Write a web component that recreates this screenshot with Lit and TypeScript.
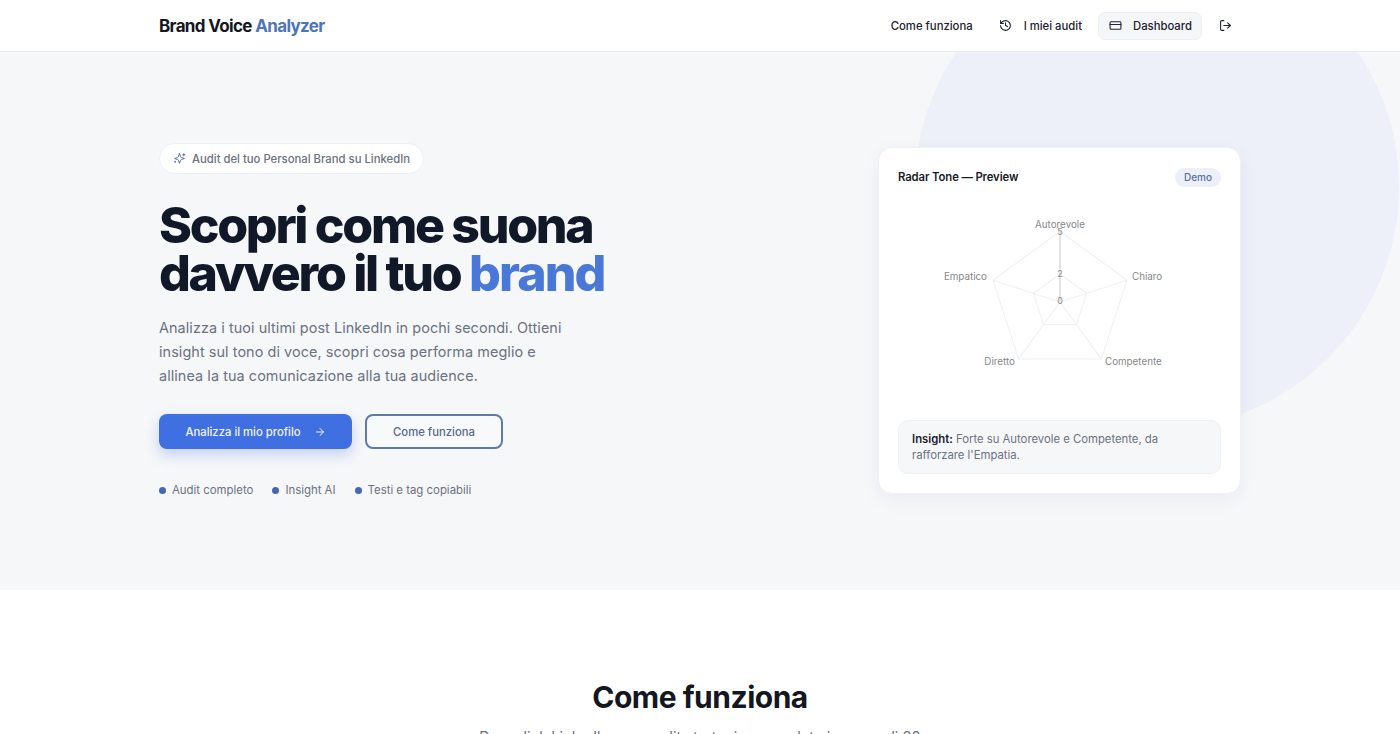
import { LitElement, html, css, svg } from "lit";
import { customElement } from "lit/decorators.js";

const CX = 162;
const CY = 95;
const pt = (i: number, r: number) => {
  const a = (-90 + i * 72) * Math.PI / 180;
  return [CX + r * Math.cos(a), CY + r * Math.sin(a)];
};
const poly = (r: number) => [0, 1, 2, 3, 4].map((i) => pt(i, r).map((v) => v.toFixed(1)).join(",")).join(" ");

@customElement("app-root")
export class AppRoot extends LitElement {
  static styles = css`
    :host { display: block; font-family: Inter, "Liberation Sans", sans-serif; color: #111827; background: #fff; }
    * { box-sizing: border-box; }
    .nav { height: 52px; background: #fff; border-bottom: 1px solid #eceef1; padding: 0 159px; display: flex; align-items: center; justify-content: space-between; }
    .logo { font-size: 17px; font-weight: 700; letter-spacing: -0.65px; color: #14171f; }
    .logo span { color: #4f74b8; }
    .links { display: flex; align-items: center; font-size: 11.3px; font-weight: 500; color: #1c2230; }
    .link { display: flex; align-items: center; gap: 12px; height: 28px; border-radius: 7px; border: 1px solid transparent; white-space: nowrap; }
    .link svg { width: 13px; height: 13px; fill: none; stroke: #1c2230; stroke-width: 2; stroke-linecap: round; stroke-linejoin: round; flex: none; }
    .l1 { margin-right: 24px; }
    .l2 { margin-right: 15px; }
    .l3 { width: 104px; padding-left: 10px; gap: 11px; background: #f5f6f8; border-color: #eff0f3; margin-right: 16px; }
    .l4 { padding-right: 8px; }
    .hero { position: relative; height: 538px; background: #f6f7f9; overflow: hidden; padding: 0 159px; display: flex; justify-content: space-between; align-items: flex-start; }
    .blob { position: absolute; left: 915px; top: -107px; width: 484px; height: 484px; border-radius: 50%; background: #edeff9; }
    .left { position: relative; padding-top: 91px; }
    .pill { display: inline-flex; align-items: center; gap: 6px; height: 31px; padding: 0 13px; border-radius: 16px; background: #fff; border: 1px solid #eef0f3; font-size: 11.3px; font-weight: 500; color: #6b7280; }
    .pill svg { width: 13px; height: 13px; fill: none; stroke: #4f6fae; stroke-width: 1.8; stroke-linecap: round; stroke-linejoin: round; }
    h1 { margin: 27px 0 0; font-size: 50px; line-height: 48px; font-weight: 800; letter-spacing: -2.3px; color: #111827; white-space: nowrap; }
    h1 span { color: #4a78d8; letter-spacing: -1.9px; }
    .lead { margin: 19px 0 0; font-size: 14.4px; line-height: 24px; color: #6b7280; letter-spacing: 0.08px; white-space: nowrap; }
    .btns { display: flex; gap: 13px; margin-top: 26px; }
    .btn { height: 35px; border-radius: 8px; display: flex; align-items: center; justify-content: center; font-size: 11.3px; font-weight: 550; }
    .primary { width: 193px; gap: 13px; background: #3f6fe0; color: #f1f5ff; box-shadow: 0 6px 14px rgba(63, 111, 224, 0.28); }
    .primary svg { width: 12px; height: 12px; fill: none; stroke: #f1f5ff; stroke-width: 2; stroke-linecap: round; stroke-linejoin: round; }
    .secondary { width: 138px; border: 2px solid #5e7ba8; color: #56698c; background: #f8f9fb; }
    .feats { display: flex; gap: 19px; margin-top: 33px; font-size: 11.4px; color: #6b7280; }
    .feat { display: flex; align-items: center; gap: 6px; line-height: 16px; }
    .feat i { width: 7px; height: 7px; border-radius: 50%; background: #4767b4; }
    .card { position: relative; width: 363px; height: 347px; margin-top: 95px; border-radius: 14px; background: #fff; border: 1px solid #f0f1f4; box-shadow: 0 6px 20px rgba(30, 41, 80, 0.05); padding: 19px; display: flex; flex-direction: column; }
    .head { display: flex; align-items: center; justify-content: space-between; height: 20px; }
    .title { font-size: 11.3px; font-weight: 600; color: #171b26; letter-spacing: -0.1px; }
    .demo { height: 19px; padding: 0 9px; border-radius: 10px; background: #edf0f9; color: #586f9f; font-size: 10px; font-weight: 500; display: flex; align-items: center; }
    .radar { display: block; width: 323px; height: 200px; margin-top: 20px; flex: none; }
    .radar text { font-family: Inter, "Liberation Sans", sans-serif; font-size: 9.8px; fill: #85878c; }
    .radar .tick { font-size: 9px; fill: #8b8d92; }
    .insight { margin-top: auto; height: 54px; border-radius: 10px; background: #f6f7f9; border: 1px solid #f0f1f4; padding: 10px 13px; font-size: 11.3px; line-height: 16px; color: #6b7280; }
    .insight b { font-weight: 600; color: #1c2230; }
    .how { background: #fff; padding-top: 87px; text-align: center; }
    h2 { margin: 0; font-size: 30px; line-height: 40px; font-weight: 700; letter-spacing: -0.5px; color: #14171f; }
    .how p { margin: 9px auto 0; width: 480px; font-size: 14.4px; line-height: 22px; letter-spacing: 0.1px; color: #6b7280; }
  `;

  render() {
    const labels = [
      { t: "Empatico", x: 89, y: 73, a: "end" },
      { t: "Chiaro", x: 234, y: 73, a: "start" },
      { t: "Diretto", x: 117, y: 158, a: "end" },
      { t: "Competente", x: 207, y: 158, a: "start" },
    ];
    return html`
      <nav class="nav">
        <div class="logo">Brand Voice <span>Analyzer</span></div>
        <div class="links">
          <div class="link l1">Come funziona</div>
          <div class="link l2">
            <svg viewBox="0 0 24 24"><path d="M3 12a9 9 0 1 0 9-9 9.75 9.75 0 0 0-6.74 2.74L3 8"/><path d="M3 3v5h5"/><path d="M12 7v5l4 2"/></svg>
            I miei audit
          </div>
          <div class="link l3">
            <svg viewBox="0 0 24 24"><rect x="2" y="5" width="20" height="14" rx="2"/><path d="M2 10h20"/></svg>
            Dashboard
          </div>
          <div class="link l4">
            <svg viewBox="0 0 24 24"><path d="M9 21H5a2 2 0 0 1-2-2V5a2 2 0 0 1 2-2h4"/><path d="m16 17 5-5-5-5"/><path d="M21 12H9"/></svg>
          </div>
        </div>
      </nav>
      <section class="hero">
        <div class="blob"></div>
        <div class="left">
          <div class="pill">
            <svg viewBox="0 0 24 24"><path d="M12 3l1.800 5.200a3 3 0 0 0 2 2L21 12l-5.200 1.800a3 3 0 0 0-2 2L12 21l-1.800-5.200a3 3 0 0 0-2-2L3 12l5.200-1.800a3 3 0 0 0 2-2z"/><path d="M20 3v4"/><path d="M22 5h-4"/><path d="M4 17v2"/><path d="M5 18H3"/></svg>
            Audit del tuo Personal Brand su LinkedIn
          </div>
          <h1>Scopri come suona<br />davvero il tuo <span>brand</span></h1>
          <p class="lead">Analizza i tuoi ultimi post LinkedIn in pochi secondi. Ottieni<br />insight sul tono di voce, scopri cosa performa meglio e<br />allinea la tua comunicazione alla tua audience.</p>
          <div class="btns">
            <div class="btn primary">Analizza il mio profilo
              <svg viewBox="0 0 24 24"><path d="M5 12h14"/><path d="m12 5 7 7-7 7"/></svg>
            </div>
            <div class="btn secondary">Come funziona</div>
          </div>
          <div class="feats">
            <div class="feat"><i></i>Audit completo</div>
            <div class="feat"><i></i>Insight AI</div>
            <div class="feat"><i></i>Testi e tag copiabili</div>
          </div>
        </div>
        <div class="card">
          <div class="head">
            <div class="title">Radar Tone — Preview</div>
            <div class="demo">Demo</div>
          </div>
          <svg class="radar" viewBox="0 0 323 200">
            ${[28, 70.5].map((r) => svg`<polygon points=${poly(r)} fill="none" stroke="#f2f2f3" stroke-width="1.2"/>`)}
            ${[0, 1, 2, 3, 4].map((i) => {
              const [x, y] = pt(i, 70.5);
              return svg`<line x1=${CX} y1=${CY} x2=${x} y2=${y} stroke=${i === 0 ? "#cfd1d4" : "#f2f2f3"} stroke-width="1.2"/>`;
            })}
            <text x=${CX} y="21" text-anchor="middle">Autorevole</text>
            ${labels.map((l) => svg`<text x=${l.x} y=${l.y} text-anchor=${l.a}>${l.t}</text>`)}
            <text class="tick" x=${CX} y="28" text-anchor="middle">5</text>
            <text class="tick" x=${CX} y="70" text-anchor="middle">2</text>
            <text class="tick" x=${CX} y="97" text-anchor="middle">0</text>
          </svg>
          <div class="insight"><b>Insight:</b> Forte su Autorevole e Competente, da rafforzare l'Empatia.</div>
        </div>
      </section>
      <section class="how">
        <h2>Come funziona</h2>
        <p>Da un link LinkedIn a un audit strategico completo in meno di 30 secondi.</p>
      </section>
    `;
  }
}
